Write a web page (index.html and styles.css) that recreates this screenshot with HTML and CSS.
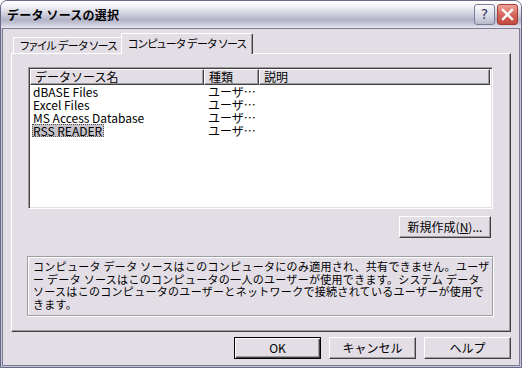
FILE: index.html
```html
<!DOCTYPE html>
<html lang="ja">
<head>
<meta charset="utf-8">
<title>データ ソースの選択</title>
<link rel="stylesheet" href="styles.css">
</head>
<body>
<div class="window">
  <div class="titlebar">
    <span class="title">データ ソースの選択</span>
    <div class="tb-buttons">
      <span class="tb-btn tb-help">?</span>
      <span class="tb-btn tb-close">
        <svg width="13" height="13" viewBox="0 0 13 13"><path d="M2 2 L11 11 M11 2 L2 11" stroke="#fff" stroke-width="2.4" stroke-linecap="square"/></svg>
      </span>
    </div>
  </div>
  <div class="client">
    <div class="tabs">
      <div class="tab">ファイル データ ソース</div>
      <div class="tab active">コンピュータ データ ソース</div>
    </div>
    <div class="panel">
      <div class="listview">
        <div class="lv-header">
          <div class="hcol c1">データソース名</div>
          <div class="hcol c2">種類</div>
          <div class="hcol c3">説明</div>
        </div>
        <div class="lv-row"><div class="cell c1"><span class="name">dBASE Files</span></div><div class="cell c2">ユーザ…</div><div class="cell c3"></div></div>
        <div class="lv-row"><div class="cell c1"><span class="name">Excel Files</span></div><div class="cell c2">ユーザ…</div><div class="cell c3"></div></div>
        <div class="lv-row"><div class="cell c1"><span class="name">MS Access Database</span></div><div class="cell c2">ユーザ…</div><div class="cell c3"></div></div>
        <div class="lv-row"><div class="cell c1"><span class="name selected">RSS READER</span></div><div class="cell c2">ユーザ…</div><div class="cell c3"></div></div>
      </div>
      <div class="new-row"><button class="btn btn-new">新規作成(<u>N</u>)...</button></div>
      <div class="info">
        <p>コンピュータ データ ソースはこのコンピュータにのみ適用され、共有できません。ユーザ<br>ー データ ソースはこのコンピュータの一人のユーザーが使用できます。システム データ<br>ソースはこのコンピュータのユーザーとネットワークで接続されているユーザーが使用で<br>きます。</p>
      </div>
    </div>
    <div class="buttons">
      <button class="btn default">OK</button>
      <button class="btn">キャンセル</button>
      <button class="btn">ヘルプ</button>
    </div>
  </div>
</div>
</body>
</html>
```
FILE: styles.css
```css
html, body {
  margin: 0;
  padding: 0;
  background: #ffffff;
}
body {
  font-family: "Noto Sans CJK JP", "Liberation Sans", sans-serif;
  font-size: 12px;
  color: #000;
}
.window {
  width: 522px;
  height: 368px;
  box-sizing: border-box;
  display: flex;
  flex-direction: column;
  background: #c4c4d4;
  border: 1px solid #6a6a88;
  border-radius: 7px 7px 0 0;
  overflow: hidden;
}
.titlebar {
  height: 27px;
  flex: none;
  display: flex;
  align-items: center;
  justify-content: space-between;
  padding: 0 3px 0 6px;
  background: linear-gradient(#ffffff 0%, #f2f2f6 20%, #d4d4e0 45%, #b2b2c8 70%, #c8c8d8 85%, #e8e8f0 100%);
}
.title {
  font-weight: bold;
  font-size: 12px;
  color: #000;
  letter-spacing: 0.2px;
  margin-top: -1px;
}
.tb-buttons {
  display: flex;
  gap: 2px;
  margin-top: -1px;
}
.tb-btn {
  width: 21px;
  height: 21px;
  box-sizing: border-box;
  border-radius: 3px;
  display: flex;
  align-items: center;
  justify-content: center;
}
.tb-help {
  border: 1px solid #7c7c9c;
  background: linear-gradient(#fbfbfd, #d8d8e4 60%, #b8b8cc);
  color: #3a3a62;
  font-family: "DejaVu Sans", sans-serif;
  font-size: 14px;
}
.tb-close {
  border: 1px solid #a33d36;
  background: linear-gradient(#eea49c, #d6675c 50%, #c24a40);
}
.client {
  flex: 1;
  margin: 0 1px 1px;
  background: #e3dee6;
  border: 1px solid #7c7c98;
  padding: 3px 8px 5px 8px;
  display: flex;
  flex-direction: column;
}
.tabs {
  display: flex;
  align-items: flex-end;
  height: 21px;
  padding-left: 2px;
  position: relative;
  z-index: 1;
}
.tab {
  height: 16px;
  box-sizing: border-box;
  padding: 0 5px 0 6px;
  border-top: 1px solid #fff;
  border-left: 1px solid #fff;
  border-right: 1px solid #404040;
  box-shadow: inset -1px 0 0 #9d9da1;
  border-radius: 2px 2px 0 0;
  font-size: 11px;
  letter-spacing: -0.5px;
  line-height: 15px;
  font-feature-settings: "palt";
  white-space: nowrap;
}
.tab.active {
  height: 21px;
  margin-left: -2px;
  margin-right: 0;
  padding: 1px 6px 0 6px;
  line-height: 17px;
  background: #e3dee6;
  margin-bottom: -1px;
}
.panel {
  flex: none;
  height: 279px;
  box-sizing: border-box;
  border-top: 1px solid #fff;
  border-left: 1px solid #fff;
  border-right: 1px solid #404040;
  border-bottom: 1px solid #404040;
  box-shadow: inset -1px -1px 0 #9d9da1;
  padding: 13px 17px 0 16px;
  display: flex;
  flex-direction: column;
}
.listview {
  height: 142px;
  box-sizing: border-box;
  background: #fff;
  border-top: 1px solid #9d9da1;
  border-left: 1px solid #9d9da1;
  border-right: 1px solid #fff;
  border-bottom: 1px solid #fff;
  box-shadow: inset 1px 1px 0 #404040, inset -1px -1px 0 #e3dee6;
  padding: 1px 2px 0 1px;
}
.lv-header {
  display: flex;
  height: 16px;
  margin-bottom: 0;
}
.hcol {
  box-sizing: border-box;
  background: #e3dee6;
  border-top: 1px solid #fff;
  border-left: 1px solid #fff;
  border-right: 1px solid #404040;
  border-bottom: 1px solid #404040;
  box-shadow: inset -1px -1px 0 #9d9da1;
  line-height: 14px;
  padding-left: 4px;
  white-space: nowrap;
}
.c1 { width: 174px; flex: none; }
.c2 { width: 55px; flex: none; }
.c3 { flex: 1; }
.lv-row {
  display: flex;
  height: 13px;
  line-height: 13px;
}
.cell {
  box-sizing: border-box;
  padding-left: 4px;
  white-space: nowrap;
}
.name {
  display: inline-block;
  padding: 0 2px 0 1px;
  margin-left: -2px;
}
.name.selected {
  background: #c5c3c9;
  outline: 1px dotted #555;
  outline-offset: -1px;
}
.new-row {
  display: flex;
  justify-content: flex-end;
  margin-top: 7px;
  padding-right: 2px;
}
.btn {
  font-family: "Noto Sans CJK JP", "Liberation Sans", sans-serif;
  font-size: 12px;
  color: #000;
  background: #e3dee6;
  height: 22px;
  box-sizing: border-box;
  border-top: 1px solid #fff;
  border-left: 1px solid #fff;
  border-right: 1px solid #404040;
  border-bottom: 1px solid #404040;
  box-shadow: inset -1px -1px 0 #9d9da1;
  border-radius: 0;
  padding: 0;
  margin: 0;
  line-height: 18px;
}
.btn-new {
  width: 92px;
}
.btn u {
  text-decoration: underline;
}
.info {
  margin-top: 18px;
  height: 60px;
  box-sizing: border-box;
  border: 1px solid #9d9da1;
  box-shadow: 1px 1px 0 #fff, inset 1px 1px 0 #fff;
  margin-left: -1px;
  padding: 3px 4px 0 5px;
}
.info p {
  margin: 0;
  font-size: 11px;
  line-height: 12.5px;
  letter-spacing: 0.3px;
  white-space: nowrap;
}
.buttons {
  display: flex;
  justify-content: flex-end;
  gap: 8px;
  margin-top: 5px;
}
.buttons .btn {
  width: 87px;
}
.btn.default {
  border: 1px solid #000;
  box-shadow: inset 1px 1px 0 #fff, inset -1px -1px 0 #404040, inset -2px -2px 0 #9d9da1;
}
```
